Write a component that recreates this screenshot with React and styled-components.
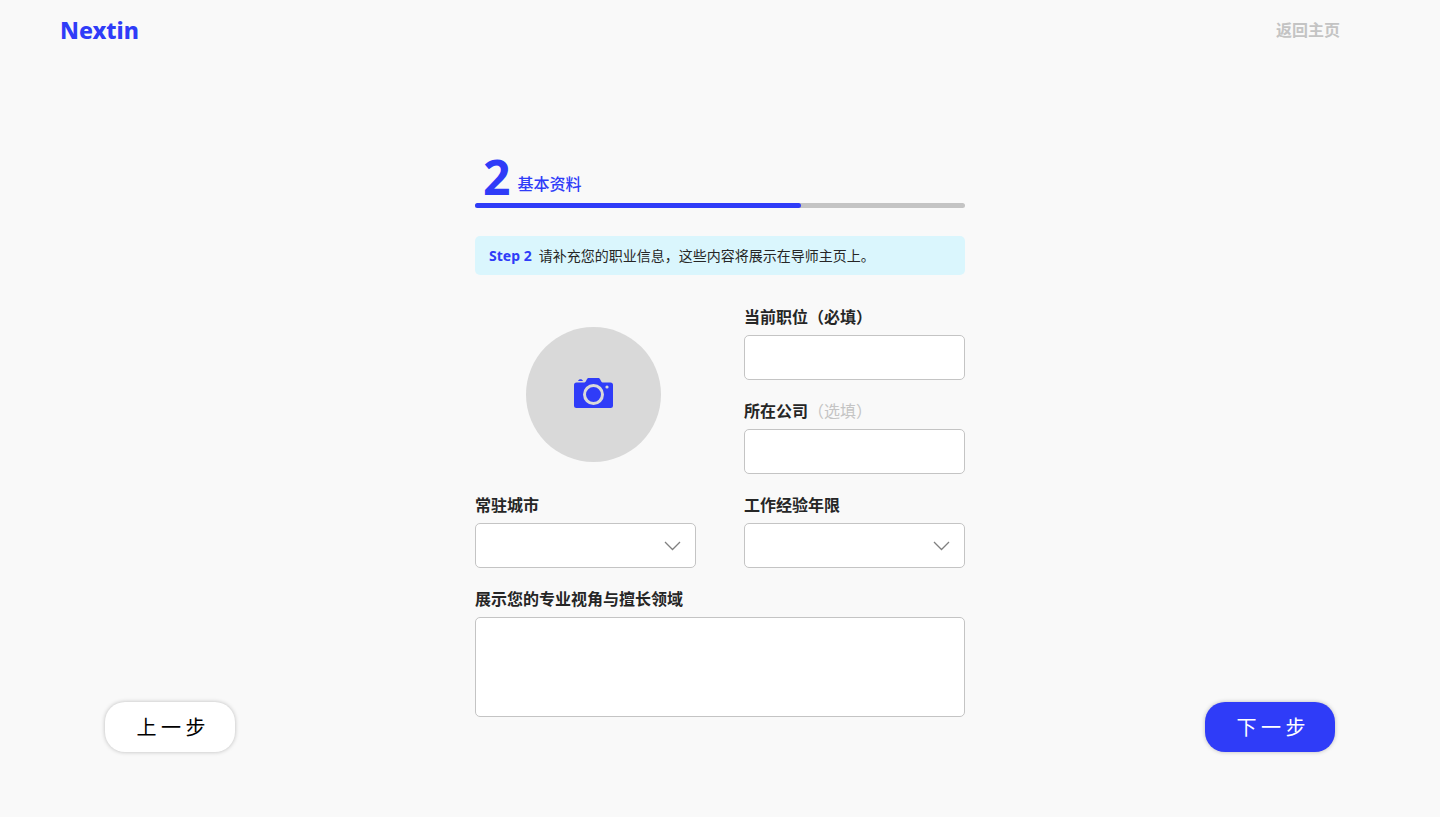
import { useState } from 'react';
import styled, { createGlobalStyle } from 'styled-components';

const colors = {
  primary: '#2f3cf8',
  background: '#f9f9f9',
  text: '#262626',
  gray: '#c4c4c4',
  avatar: '#d9d9d9',
  hint: '#daf6fd',
  white: '#ffffff',
};

const CITIES = ['北京', '上海', '广州', '深圳'];
const YEARS = ['1-3年', '3-5年', '5-10年', '10年以上'];

const CameraIcon = () => (
  <svg width="39" height="33" viewBox="0 0 39 33" aria-hidden="true">
    <path
      fill={colors.primary}
      d="M2.5 4.5H9.500c1.200 0 2-.5 2.500-1.500L12.900 1.300C13.300.4 14 0 15 0h9c1 0 1.700.4 2.100 1.300L27 3c.5 1 1.300 1.500 2.500 1.500h7A2.500 2.500 0 0 1 39 7v20.500a2.500 2.500 0 0 1-2.500 2.500h-34A2.500 2.500 0 0 1 0 27.500V7a2.500 2.500 0 0 1 2.500-2.500Z"
    />
    <path fill={colors.primary} d="M4 3C4.500 1.700 5.300 1.200 6.500 1.200S8.500 1.700 9 3Z" />
    <circle cx="19.5" cy="16.500" r="9" fill={colors.primary} stroke={colors.avatar} strokeWidth="3" />
    <circle cx="33" cy="9" r="1.600" fill={colors.avatar} />
  </svg>
);

const ChevronIcon = () => (
  <svg width="17" height="10" viewBox="0 0 17 10" aria-hidden="true">
    <path d="M1 1l7.500 7.500L16 1" fill="none" stroke="#808080" strokeWidth="1.300" />
  </svg>
);

const SelectField = ({ id, label, options }) => (
  <Field>
    <Label htmlFor={id}>{label}</Label>
    <SelectBox>
      <StyledSelect id={id} name={id} defaultValue="">
        <option value=""></option>
        {options.map((option) => (
          <option key={option} value={option}>
            {option}
          </option>
        ))}
      </StyledSelect>
      <ChevronIcon />
    </SelectBox>
  </Field>
);

export default function App() {
  const [progress] = useState(326 / 490);

  return (
    <>
      <GlobalStyle />
      <Page>
        <Header>
          <Logo href="#">Nextin</Logo>
          <HomeLink href="#">返回主页</HomeLink>
        </Header>

        <Form id="profile">
          <StepTitle>
            <StepNumber>2</StepNumber>
            基本资料
          </StepTitle>
          <ProgressBar>
            <Progress style={{ width: `${progress * 100}%` }} />
          </ProgressBar>

          <Hint>
            <strong>Step 2</strong>
            <span>请补充您的职业信息，这些内容将展示在导师主页上。</span>
          </Hint>

          <Fields>
            <AvatarCell>
              <AvatarButton type="button" aria-label="上传头像">
                <CameraIcon />
              </AvatarButton>
            </AvatarCell>
            <Field>
              <Label htmlFor="position">当前职位（必填）</Label>
              <StyledInput id="position" name="position" />
            </Field>
            <Field>
              <Label htmlFor="company">
                所在公司<Optional>（选填）</Optional>
              </Label>
              <StyledInput id="company" name="company" />
            </Field>
            <SelectField id="city" label="常驻城市" options={CITIES} />
            <SelectField id="years" label="工作经验年限" options={YEARS} />
            <Field $wide>
              <Label htmlFor="introduction">展示您的专业视角与擅长领域</Label>
              <StyledTextArea id="introduction" name="introduction" />
            </Field>
          </Fields>
        </Form>

        <Footer>
          <StepButton type="button">上 一 步</StepButton>
          <StepButton type="submit" form="profile" $primary>
            下 一 步
          </StepButton>
        </Footer>
      </Page>
    </>
  );
}

const GlobalStyle = createGlobalStyle`
  * {
    box-sizing: border-box;
  }
  body {
    margin: 0;
    background-color: ${colors.white};
    color: ${colors.text};
    font-family: 'Noto Sans', 'Noto Sans CJK SC', sans-serif;
  }
  button, input, select, textarea {
    font-family: inherit;
  }
`;

const Page = styled.div`
  display: flex;
  flex-direction: column;
  min-height: calc(100vh - 4px);
  background-color: ${colors.background};
`;

const Header = styled.header`
  display: flex;
  align-items: center;
  justify-content: space-between;
  height: 60px;
  padding: 0 100px 0 60px;
`;

const Logo = styled.a`
  color: ${colors.primary};
  font-size: 23px;
  font-weight: 800;
  line-height: 32px;
  text-decoration: none;
`;

const HomeLink = styled.a`
  color: ${colors.gray};
  font-size: 16px;
  font-weight: 700;
  line-height: 24px;
  text-decoration: none;
`;

const Form = styled.form`
  width: 100%;
  max-width: 490px;
  margin: 92px auto 0;
`;

const StepTitle = styled.h1`
  display: flex;
  align-items: flex-end;
  gap: 7px;
  height: 51px;
  margin: 0;
  padding: 0 0 7px 8px;
  color: ${colors.primary};
  font-size: 16px;
  font-weight: 500;
  line-height: 24px;
`;

const StepNumber = styled.span`
  font-size: 48px;
  font-weight: 700;
  line-height: 38px;
`;

const ProgressBar = styled.div`
  height: 5px;
  border-radius: 3px;
  background-color: ${colors.gray};
`;

const Progress = styled.div`
  height: 100%;
  border-radius: 3px;
  background-color: ${colors.primary};
`;

const Hint = styled.p`
  display: flex;
  align-items: center;
  gap: 7px;
  height: 39px;
  margin: 28px 0 30px;
  padding: 0 14px;
  border-radius: 5px;
  background-color: ${colors.hint};
  font-size: 14px;
  line-height: 20px;

  strong {
    color: ${colors.primary};
    font-weight: 700;
  }
`;

const Fields = styled.div`
  display: grid;
  grid-template-columns: 1fr 1fr;
  gap: 19px 48px;
`;

const AvatarCell = styled.div`
  display: flex;
  grid-row: span 2;
  align-items: center;
  justify-content: center;
  padding: 10px 0 0 16px;
`;

const AvatarButton = styled.button`
  display: flex;
  align-items: center;
  justify-content: center;
  width: 135px;
  height: 135px;
  padding: 0;
  border: 0;
  border-radius: 50%;
  background-color: ${colors.avatar};
  cursor: pointer;
`;

const Field = styled.div`
  display: flex;
  flex-direction: column;
  gap: 6px;
  ${({ $wide }) => $wide && 'grid-column: span 2;'}
`;

const Label = styled.label`
  font-size: 16px;
  font-weight: 700;
  line-height: 24px;
`;

const Optional = styled.span`
  color: ${colors.gray};
  font-weight: 400;
`;

const StyledInput = styled.input`
  width: 100%;
  height: 45px;
  padding: 0 14px;
  border: 1px solid ${colors.gray};
  border-radius: 5px;
  background-color: ${colors.white};
  color: ${colors.text};
  font-size: 16px;
`;

const SelectBox = styled.div`
  position: relative;

  svg {
    position: absolute;
    top: 18px;
    right: 15px;
    pointer-events: none;
  }
`;

const StyledSelect = styled(StyledInput).attrs({ as: 'select' })`
  display: block;
  appearance: none;
`;

const StyledTextArea = styled(StyledInput).attrs({ as: 'textarea' })`
  height: 100px;
  padding: 10px 14px;
  resize: none;
`;

const Footer = styled.footer`
  display: flex;
  justify-content: space-between;
  margin-top: auto;
  padding: 0 105px 65px;
`;

const StepButton = styled.button`
  width: 130px;
  height: 50px;
  margin-top: -15px;
  padding: 0 0 2px 2px;
  border: 0;
  border-radius: 20px;
  background-color: ${({ $primary }) => ($primary ? colors.primary : colors.white)};
  box-shadow: 0 0 4px rgba(0, 0, 0, 0.25);
  color: ${({ $primary }) => ($primary ? colors.white : '#000000')};
  font-family: 'Noto Sans CJK SC', sans-serif;
  font-size: 20px;
  cursor: pointer;
`;
